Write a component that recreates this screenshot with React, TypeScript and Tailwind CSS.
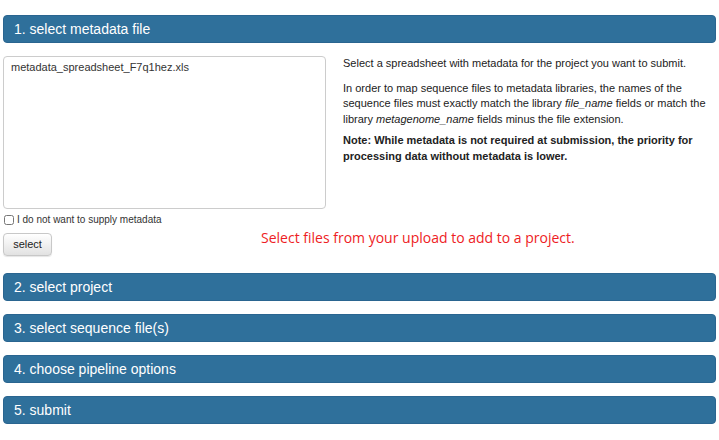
const steps = ['2. select project', '3. select sequence file(s)', '4. choose pipeline options', '5. submit'];

const StepHeader = ({ title }: { title: string }) => (
  <div className="flex h-[28px] items-center rounded-[4px] border border-[#2a6590] bg-[#2f709b] px-[10px] text-[14px] text-white">
    {title}
  </div>
);

const App = () => {
  return (
    <div className="min-h-screen bg-white px-[3px] pt-[15px] font-['Liberation_Sans',Arial,sans-serif] text-[#333]">
      <StepHeader title="1. select metadata file" />
      <div className="flex pt-[13px]">
        <div className="w-[323px] shrink-0">
          <div className="h-[153px] rounded-[4px] border border-[#ccc] bg-white px-[7px] pt-[2px] text-[11px]">
            metadata_spreadsheet_F7q1hez.xls
          </div>
          <label className="mt-[3px] flex items-center gap-[3px] text-[10px]">
            <input type="checkbox" className="m-0 ml-[1px] h-[10px] w-[10px]" />
            I do not want to supply metadata
          </label>
          <button
            type="button"
            className="mt-[6px] h-[23px] w-[49px] rounded-[4px] border border-[#c8c8c8] bg-gradient-to-b from-white to-[#e2e2e2] text-[11px] text-[#222] shadow-[0_1px_1px_rgba(0,0,0,0.1)]"
          >
            select
          </button>
        </div>
        <div className="flex flex-1 flex-col pl-[17px] text-[11px] leading-[15.5px] text-[#222]">
          <p>Select a spreadsheet with metadata for the project you want to submit.</p>
          <p className="mt-[9px]">
            In order to map sequence files to metadata libraries, the names of the sequence files must exactly match
            the library <i>file_name</i> fields or match the library <i>metagenome_name</i> fields minus the file
            extension.
          </p>
          <p className="mt-[6px] font-bold">
            Note: While metadata is not required at submission, the priority for processing data without metadata is
            lower.
          </p>
          <p className="mt-[66px] -ml-[82px] font-['Open_Sans',sans-serif] text-[14px] text-[#ee1c24]">
            Select files from your upload to add to a project.
          </p>
        </div>
      </div>
      <div className="mt-[17px] flex flex-col gap-[13px]">
        {steps.map((s) => (
          <StepHeader key={s} title={s} />
        ))}
      </div>
    </div>
  );
};

export default App;
